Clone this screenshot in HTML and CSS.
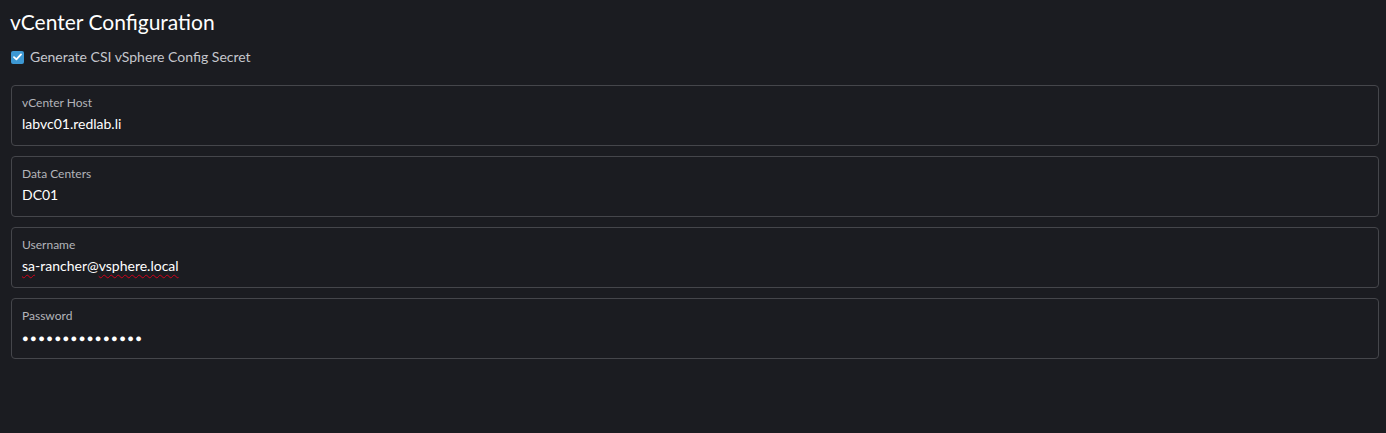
FILE: index.html
```html
<!DOCTYPE html>
<html lang="en">
<head>
  <meta charset="UTF-8">
  <title>vCenter Configuration</title>
  <link rel="stylesheet" href="styles.css">
</head>
<body>

  <div class="section">
    <h2>vCenter Configuration</h2>

    <label class="check">
      <span class="box">
        <svg width="9" height="8" viewBox="0 0 9 8"><path d="M1 4.2 L3.4 6.4 L8 1.4" fill="none" stroke="#fff" stroke-width="1.8" stroke-linecap="round" stroke-linejoin="round"/></svg>
      </span>
      Generate CSI vSphere Config Secret
    </label>

    <div class="field">
      <div class="field-label">vCenter Host</div>
      <div class="field-value">labvc01.redlab.li</div>
    </div>

    <div class="field">
      <div class="field-label">Data Centers</div>
      <div class="field-value">DC01</div>
    </div>

    <div class="field">
      <div class="field-label">Username</div>
      <div class="field-value"><span class="typo">sa</span>-rancher@<span class="typo">vsphere.local</span></div>
    </div>

    <div class="field">
      <div class="field-label">Password</div>
      <div class="field-value dots">&#9679;&#9679;&#9679;&#9679;&#9679;&#9679;&#9679;&#9679;&#9679;&#9679;&#9679;&#9679;&#9679;&#9679;&#9679;</div>
    </div>
  </div>

</body>
</html>
```

FILE: styles.css
```css
body {
  margin: 0;
  background: #1b1c21;
  font-family: Lato, "Open Sans", sans-serif;
  color: #ffffff;
}

.section {
  padding: 8px 7px 0 11px;
}

h2 {
  font-size: 21px;
  font-weight: 400;
  margin: 0 0 0 -1px;
  line-height: 28px;
}

.check {
  display: flex;
  align-items: center;
  gap: 6px;
  margin: 13px 0 20px;
  font-size: 14px;
  color: #c5c6cc;
  line-height: 16px;
}

.box {
  width: 13px;
  height: 13px;
  border-radius: 2px;
  background: #3d98d3;
  display: flex;
  align-items: center;
  justify-content: center;
}

.field {
  border: 1px solid #45464b;
  border-radius: 4px;
  height: 59px;
  box-sizing: content-box;
  padding: 0 10px;
  margin-bottom: 10px;
}

.field-label {
  font-size: 12px;
  color: #b3b4ba;
  margin-top: 10px;
  line-height: 14px;
}

.field-value {
  font-size: 14px;
  margin-top: 4px;
  line-height: 20px;
}

.typo {
  text-decoration: underline wavy #d0021b;
  text-decoration-thickness: 1px;
  text-underline-offset: 3px;
}

.dots {
  font-family: "Liberation Sans", sans-serif;
  font-size: 11px;
  letter-spacing: 1.45px;
  margin-top: 5px;
}
```
